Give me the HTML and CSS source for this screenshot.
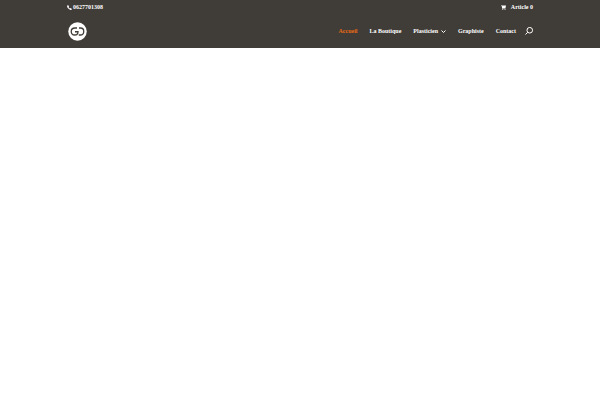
FILE: index.html
```html
<!DOCTYPE html>
<html lang="fr">
<head>
<meta charset="utf-8">
<meta name="viewport" content="width=device-width, initial-scale=1">
<title>Accueil</title>
<link rel="stylesheet" href="styles.css">
</head>
<body>
<header class="header">
  <div class="container topbar">
    <a class="info" href="tel:0627701308">
      <svg class="info-icon" viewBox="0 0 10 10" aria-hidden="true"><path d="M2.200 0 4.200 3 3 4.200c.6 1.200 1.500 2 2.700 2.700L7 5.800l3 2c-.5 1.800-1.700 2.400-3.200 2C3.500 9 1 6.500.2 3.200-.1 1.700.7.500 2.200 0Z"/></svg>
      <span>0627701308</span>
    </a>
    <a class="info cart" href="#">
      <svg class="info-icon" viewBox="0 0 10 10" aria-hidden="true"><path d="M0 1h10L9 6H3.300l.2 1H9v1H2.700L1.300 2H0Z"/><circle cx="3.600" cy="9" r="1"/><circle cx="8" cy="9" r="1"/></svg>
      <span>Article 0</span>
    </a>
  </div>
  <div class="container mainbar">
    <a class="logo" href="#" aria-label="Accueil">
      <svg viewBox="0 0 38 38" aria-hidden="true"><circle cx="19" cy="19" r="18.500" fill="#fff"/><path d="M18 12h-4c-4.500 0-7.500 3-7.500 7s3 7 7 7c4.500 0 6.500-2.500 6.500-6.500h-6M22 12h3c4 0 6.500 3 6.500 7s-3 7-7 7h-3" fill="none" stroke="#403c37" stroke-width="2.600"/></svg>
    </a>
    <nav class="nav" aria-label="Menu principal">
      <a class="active" href="#">Accueil</a>
      <a href="#">La Boutique</a>
      <a class="parent" href="#">Plasticien <svg viewBox="0 0 10 10" aria-hidden="true"><path d="m1 3 4 4 4-4"/></svg></a>
      <a href="#">Graphiste</a>
      <a href="#">Contact</a>
      <button class="search" type="button" aria-label="Rechercher"><svg viewBox="0 0 16 16" aria-hidden="true"><circle cx="9.500" cy="6.500" r="5.600"/><path d="M5.500 10.500 1 15"/></svg></button>
    </nav>
  </div>
</header>
<main></main>
</body>
</html>
```
FILE: styles.css
```css
body {
  margin: 0;
  background: #fff;
  font-family: "Liberation Serif", serif;
  color: #fff;
}

a {
  color: inherit;
  text-decoration: none;
}

.header {
  background: #403c37;
}

.container {
  display: flex;
  align-items: center;
  justify-content: space-between;
  box-sizing: border-box;
  width: 78%;
  margin: 0 auto;
  padding: 0 1px;
}

.topbar {
  height: 14px;
  font-size: 6px;
  font-weight: bold;
}

.info {
  display: flex;
  align-items: center;
  gap: 1px;
}

.cart {
  gap: 5px;
}

.info-icon {
  width: 5px;
  height: 5px;
  fill: #fff;
}

.mainbar {
  height: 34px;
}

.logo svg {
  display: block;
  width: 19px;
  height: 19px;
  margin-left: 1px;
}

.nav {
  display: flex;
  align-items: center;
  gap: 12px;
  font-size: 6px;
  font-weight: bold;
}

.active {
  color: #e86a14;
}

.parent {
  display: flex;
  align-items: center;
  gap: 3px;
}

.parent svg {
  width: 5px;
  height: 5px;
  fill: none;
  stroke: #fff;
  stroke-width: 2;
}

.search {
  display: block;
  margin-left: -3px;
  padding: 0;
  border: 0;
  background: none;
}

.search svg {
  display: block;
  width: 8px;
  height: 8px;
  fill: none;
  stroke: #fff;
  stroke-width: 2;
}
```
